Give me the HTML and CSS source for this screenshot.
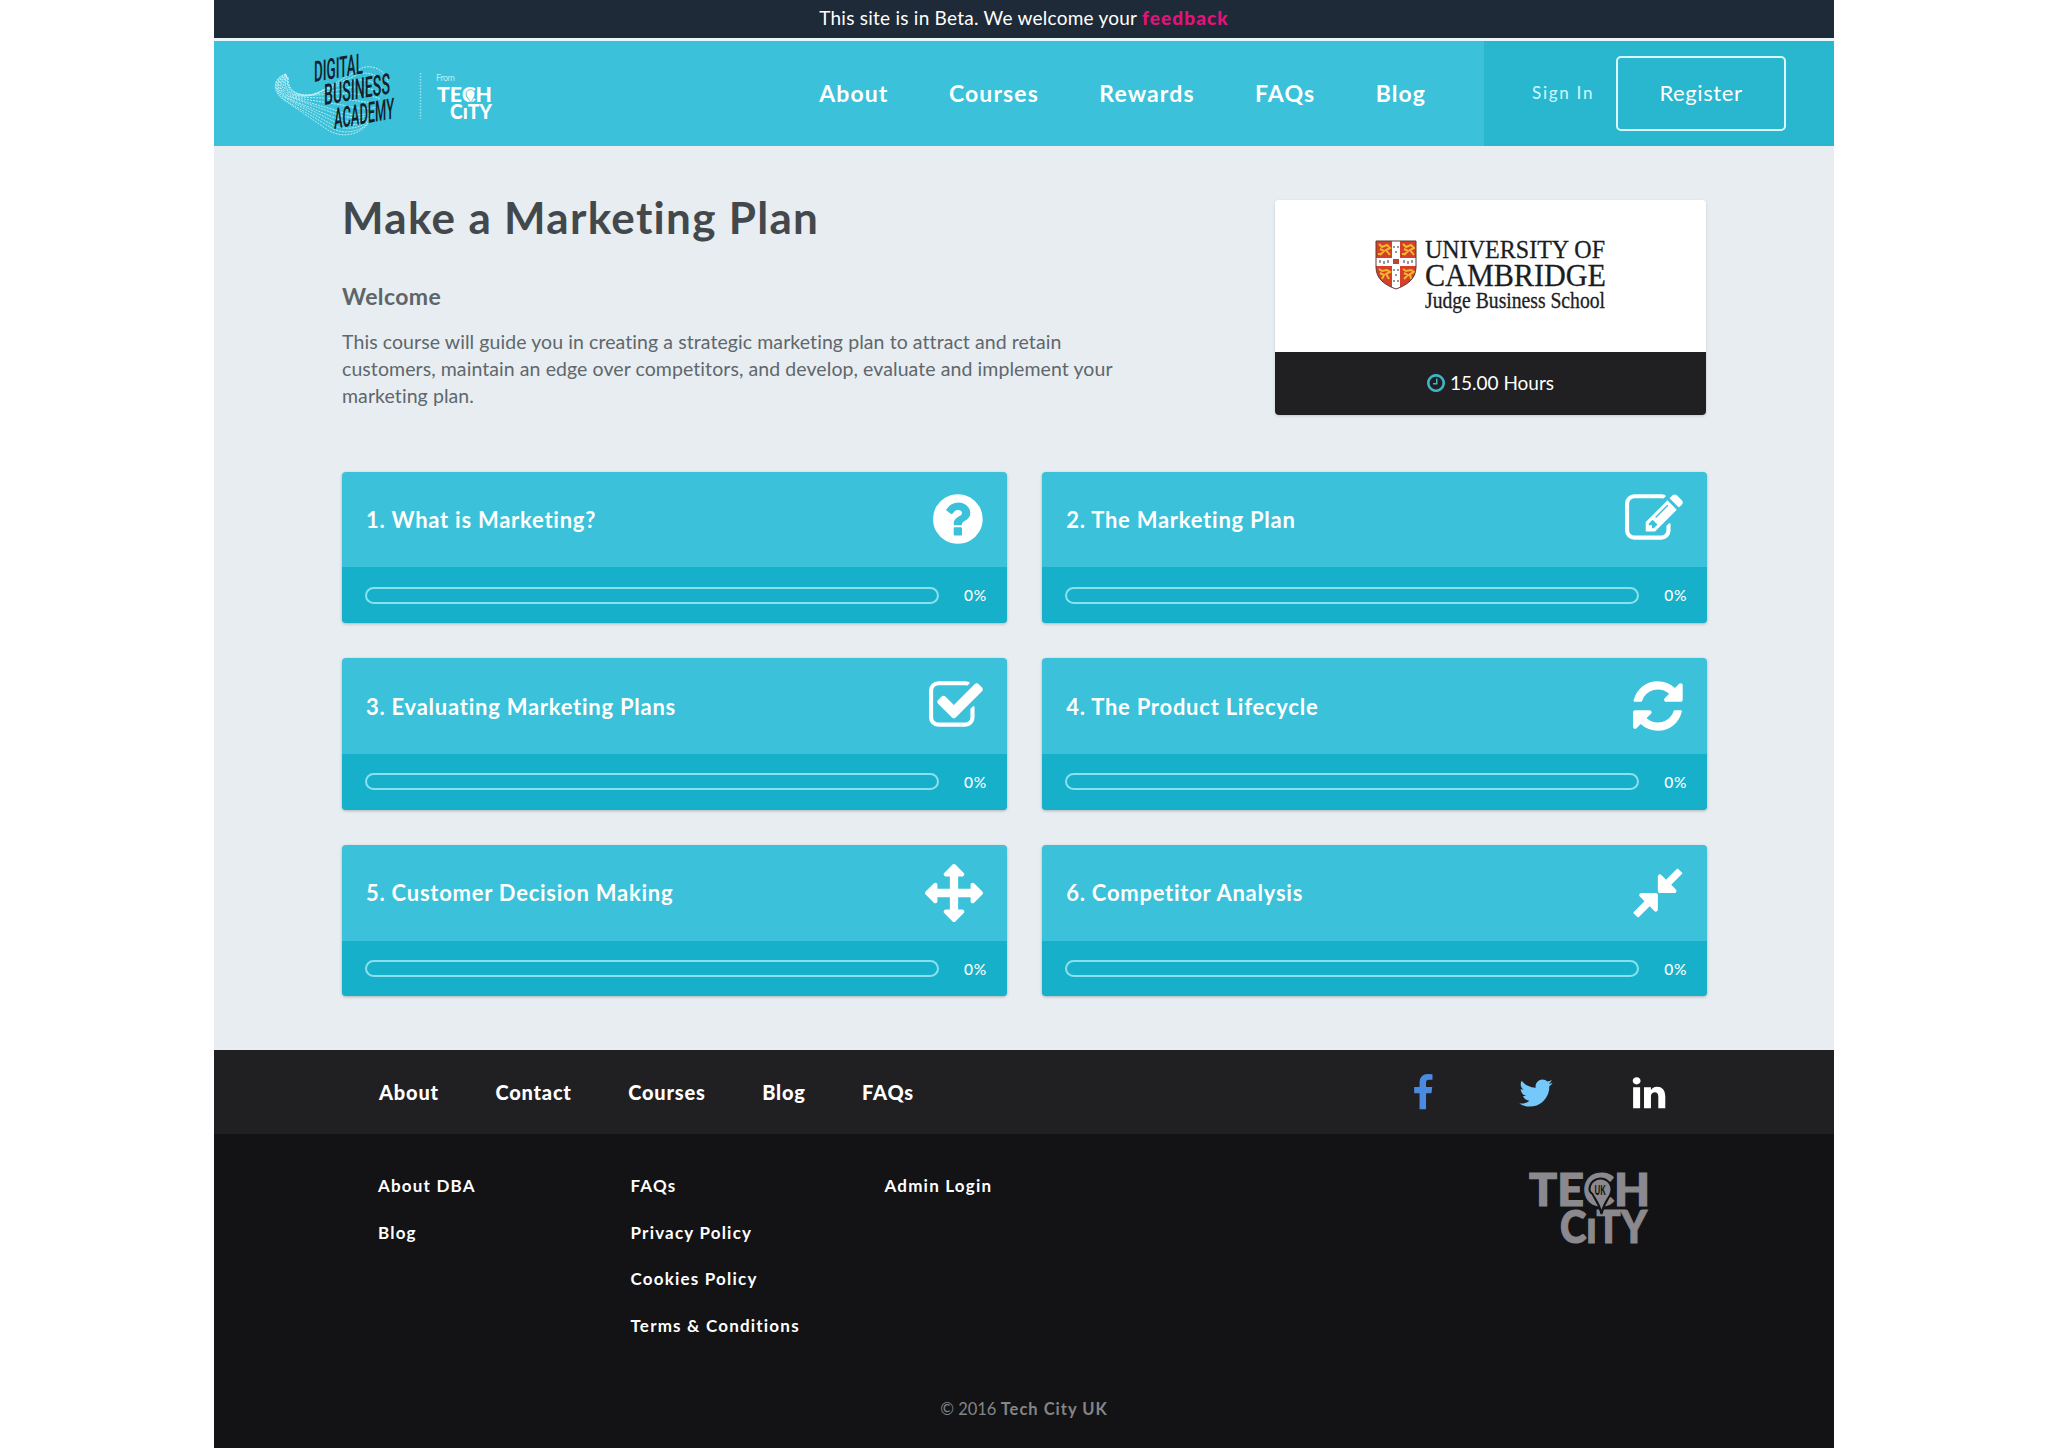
FILE: index.html
```html
<!doctype html>

<html lang="en">

<head>
  <meta charset="utf-8">
  <title>Make a Marketing Plan - Digital Business Academy</title>
  <link rel="stylesheet" href="styles.css">
</head>

<body>
  <div class="page">
    <div class="beta-bar">
      <span>This site is in Beta. We welcome your <a href="#">feedback</a></span>
    </div>

    <header class="header">
      <a class="header-logo" href="#">
        <svg width="240" height="100" viewBox="0 0 240 100">
          <g class="logo-wave">
            <path d="M22 30C8 34 8 48 20 56L64 86C76 94 94 92 104 80"/>
            <path d="M22 30C9 34 9 48 21 56L66 83C78 91 96 89 105 78"/>
            <path d="M22 30C10 35 10 49 23 55L67 80C79 87 97 85 106 76"/>
            <path d="M22 31C11 36 11 49 25 55L69 77C81 83 98 82 107 74"/>
            <path d="M22 31C11 36 12 49 26 55L71 74C82 79 100 79 108 72"/>
            <path d="M23 31C12 37 14 50 28 54L72 70C84 75 101 75 109 69"/>
            <path d="M23 31C13 37 15 50 30 54L74 67C86 72 102 72 110 67"/>
            <path d="M23 32C14 38 17 50 33 54L78 61C89 64 105 66 112 63"/>
            <path d="M23 32C16 39 19 51 36 53L81 55C92 57 108 59 114 59"/>
            <path d="M23 32C18 40 21 52 39 52L84 49C95 50 111 52 116 55"/>
            <path d="M23 33C19 41 23 52 42 52L88 43C98 42 114 46 118 51"/>
            <path d="M24 33C21 42 26 53 46 51L91 36C102 35 116 39 120 46"/>
            <path d="M24 34C22 43 28 53 49 51L95 30C105 27 119 33 122 42"/>
            <path d="M24 34C24 44 30 54 52 50L98 24C108 20 122 26 124 38"/>
          </g>
          <g class="logo-name">
            <text transform="translate(50 38) skewY(-10)" textLength="49" lengthAdjust="spacingAndGlyphs">DIGITAL</text>
            <text transform="translate(60 61) skewY(-10)" textLength="66" lengthAdjust="spacingAndGlyphs">BUSINESS</text>
            <text transform="translate(70 85) skewY(-10)" textLength="60" lengthAdjust="spacingAndGlyphs">ACADEMY</text>
          </g>
          <path class="logo-divider" d="M156.500 29v46"/>
          <text class="logo-from" x="172" y="37" textLength="19">From</text>
          <g class="logo-city">
            <text x="173" y="57.500" textLength="55" lengthAdjust="spacingAndGlyphs">TECH</text>
            <text x="186" y="74.500" textLength="42" lengthAdjust="spacingAndGlyphs">CıTY</text>
          </g>
          <path class="logo-pin" d="M202 50a4.500 4.500 0 1 1 9 0c0 3-3 5-4 10-1-5-5-7-5-10z"/>
        </svg>
      </a>
      <nav class="header-nav">
        <a href="#">About</a>
        <a href="#">Courses</a>
        <a href="#">Rewards</a>
        <a href="#">FAQs</a>
        <a href="#">Blog</a>
      </nav>
      <div class="header-auth">
        <a class="sign-in" href="#">Sign In</a>
        <a class="register" href="#">Register</a>
      </div>
    </header>

    <main class="main">
      <section class="intro">
        <div class="intro-text">
          <h1>Make a Marketing Plan</h1>
          <h2>Welcome</h2>
          <p>This course will guide you in creating a strategic marketing plan to attract and retain<br>customers, maintain an edge over competitors, and develop, evaluate and implement your<br>marketing plan.</p>
        </div>
        <aside class="partner">
          <div class="partner-logo">
            <svg width="232" height="80" viewBox="0 0 232 80">
              <path d="M1 1h40v26c0 12-9 18-20 22C10 45 1 39 1 27z" fill="#d6402b"/>
              <path d="M17 1h8v17h16v8H25v22l-4 1.500-4-1.500V26H1v-8h16z" fill="#fff"/>
              <g class="lions">
                <path d="M4 4l3 3 5-2 3 3-4 2 4 5M5 9l4 2-4 4M3 14h4"/>
                <path d="M28 4l3 3 5-2 3 3-4 2 4 5M29 9l4 2-4 4M27 14h4"/>
                <path d="M4 29l3 2 5-1 3 2-4 2 3 5M5 33l4 2-2 4"/>
                <path d="M28 29l3 2 5-1 3 2-4 2 1 5M29 33l4 2-4 4"/>
              </g>
              <path d="M18 19h6v5h-6z" fill="#b5482f"/>
              <path d="M5 20v3M9 21v3M13 20v3M29 20v3M33 21v3M37 20v3M19 6v2M23 6v2M21 11v2M19 29v2M23 29v2M21 34v2M19 40v2M23 40v2" stroke="#333"/>
              <path d="M1 1h40v26c0 12-9 18-20 22C10 45 1 39 1 27z" fill="none" stroke="#5c3a35"/>
              <g class="partner-name">
                <text x="50" y="18" font-size="26" textLength="180" lengthAdjust="spacingAndGlyphs">UNIVERSITY OF</text>
                <text x="50" y="45.500" font-size="32" textLength="181" lengthAdjust="spacingAndGlyphs">CAMBRIDGE</text>
                <text x="50" y="68" font-size="22.500" textLength="180" lengthAdjust="spacingAndGlyphs">Judge Business School</text>
              </g>
            </svg>
          </div>
          <div class="partner-hours">
            <svg width="18" height="18" viewBox="128 128 1536 1536"><path d="M1024 544v448q0 14-9 23t-23 9h-320q-14 0-23-9t-9-23v-64q0-14 9-23t23-9h224v-352q0-14 9-23t23-9h64q14 0 23 9t9 23zm416 352q0-148-73-273t-198-198-273-73-273 73-198 198-73 273 73 273 198 198 273 73 273-73 198-198 73-273zm224 0q0 209-103 385.500t-279.500 279.500-385.500 103-385.500-103-279.500-279.500-103-385.500 103-385.500 279.500-279.500 385.500-103 385.500 103 279.500 279.500 103 385.500z"/></svg>
            <span>15.00 Hours</span>
          </div>
        </aside>
      </section>

      <section class="modules">
        <a class="module" href="#">
          <div class="module-head">
            <h3>1. What is Marketing?</h3>
            <svg class="module-icon" viewBox="128 0 1536 1792"><path d="M1024 1376v-192q0-14-9-23t-23-9h-192q-14 0-23 9t-9 23v192q0 14 9 23t23 9h192q14 0 23-9t9-23zm256-672q0-88-55.500-163t-138.500-116-170-41q-243 0-371 213-15 24 8 42l132 100q7 6 19 6 16 0 25-12 53-68 86-92 34-24 86-24 48 0 85.500 26t37.500 59q0 38-20 61t-68 45q-63 28-115.500 86.500t-52.500 125.500v36q0 14 9 23t23 9h192q14 0 23-9t9-23q0-19 21.500-49.500t54.500-49.500q32-18 49-28.500t46-35 44.500-48 28-60.500 12.500-81zm384 192q0 209-103 385.500t-279.500 279.500-385.500 103-385.500-103-279.500-279.500-103-385.500 103-385.500 279.500-279.500 385.500-103 385.500 103 279.500 279.500 103 385.500z"/></svg>
          </div>
          <div class="module-progress">
            <div class="progress"></div>
            <span>0%</span>
          </div>
        </a>
        <a class="module" href="#">
          <div class="module-head">
            <h3>2. The Marketing Plan</h3>
            <svg class="module-icon" viewBox="0 0 1792 1792"><path d="M888 1184l116-116-152-152-116 116v56h96v96h56zm440-720q-16-16-33 1l-350 350q-17 17-1 33t33-1l350-350q17-17 1-33zm80 594v190q0 119-84.500 203.500t-203.500 84.500h-832q-119 0-203.500-84.500t-84.500-203.500v-832q0-119 84.500-203.500t203.500-84.500h832q63 0 117 25 15 7 18 23 3 17-9 29l-49 49q-14 14-32 8-23-6-45-6h-832q-66 0-113 47t-47 113v832q0 66 47 113t113 47h832q66 0 113-47t47-113v-126q0-13 9-22l64-64q15-15 35-7t20 29zm-96-738l288 288-672 672h-288v-288zm444 132l-92 92-288-288 92-92q28-28 68-28t68 28l152 152q28 28 28 68t-28 68z"/></svg>
          </div>
          <div class="module-progress">
            <div class="progress"></div>
            <span>0%</span>
          </div>
        </a>
        <a class="module" href="#">
          <div class="module-head">
            <h3>3. Evaluating Marketing Plans</h3>
            <svg class="module-icon" viewBox="64 0 1664 1792"><path d="M1472 930v318q0 119-84.500 203.500t-203.500 84.500h-832q-119 0-203.500-84.500t-84.500-203.500v-832q0-119 84.500-203.500t203.500-84.500h832q63 0 117 25 15 7 18 23 3 17-9 29l-49 49q-10 10-23 10-3 0-9-2-23-6-45-6h-832q-66 0-113 47t-47 113v832q0 66 47 113t113 47h832q66 0 113-47t47-113v-254q0-13 9-22l64-64q10-10 23-10 6 0 12 3 20 8 20 29zm231-489l-814 814q-24 24-57 24t-57-24l-430-430q-24-24-24-57t24-57l110-110q24-24 57-24t57 24l263 263 647-647q24-24 57-24t57 24l110 110q24 24 24 57t-24 57z"/></svg>
          </div>
          <div class="module-progress">
            <div class="progress"></div>
            <span>0%</span>
          </div>
        </a>
        <a class="module" href="#">
          <div class="module-head">
            <h3>4. The Product Lifecycle</h3>
            <svg class="module-icon" viewBox="128 0 1536 1792"><path d="M1639 1056q0 5-1 7-64 268-268 434.500t-478 166.500q-146 0-282.500-55t-243.500-157l-129 129q-19 19-45 19t-45-19-19-45v-448q0-26 19-45t45-19h448q26 0 45 19t19 45-19 45l-137 137q71 66 161 102t187 36q134 0 250-65t186-179q11-17 53-117 8-23 30-23h192q13 0 22.500 9.500t9.500 22.500zm25-800v448q0 26-19 45t-45 19h-448q-26 0-45-19t-19-45 19-45l138-138q-148-137-349-137-134 0-250 65t-186 179q-11 17-53 117-8 23-30 23h-199q-13 0-22.500-9.500t-9.500-22.500v-7q65-268 270-434.500t480-166.500q146 0 284 55.500t245 156.500l130-129q19-19 45-19t45 19 19 45z"/></svg>
          </div>
          <div class="module-progress">
            <div class="progress"></div>
            <span>0%</span>
          </div>
        </a>
        <a class="module" href="#">
          <div class="module-head">
            <h3>5. Customer Decision Making</h3>
            <svg class="module-icon" viewBox="0 0 1792 1792"><path d="M1792 896q0 26-19 45l-256 256q-19 19-45 19t-45-19-19-45v-128h-384v384h128q26 0 45 19t19 45-19 45l-256 256q-19 19-45 19t-45-19l-256-256q-19-19-19-45t19-45 45-19h128v-384h-384v128q0 26-19 45t-45 19-45-19l-256-256q-19-19-19-45t19-45l256-256q19-19 45-19t45 19 19 45v128h384v-384h-128q-26 0-45-19t-19-45 19-45l256-256q19-19 45-19t45 19l256 256q19 19 19 45t-19 45-45 19h-128v384h384v-128q0-26 19-45t45-19 45 19l256 256q19 19 19 45z"/></svg>
          </div>
          <div class="module-progress">
            <div class="progress"></div>
            <span>0%</span>
          </div>
        </a>
        <a class="module" href="#">
          <div class="module-head">
            <h3>6. Competitor Analysis</h3>
            <svg class="module-icon" viewBox="128 0 1536 1792"><path d="M896 960v448q0 26-19 45t-45 19-45-19l-144-144-332 332q-10 10-23 10t-23-10l-114-114q-10-10-10-23t10-23l332-332-144-144q-19-19-19-45t19-45 45-19h448q26 0 45 19t19 45zm755-672q0 13-10 23l-332 332 144 144q19 19 19 45t-19 45-45 19h-448q-26 0-45-19t-19-45v-448q0-26 19-45t45-19 45 19l144 144 332-332q10-10 23-10t23 10l114 114q10 10 10 23z"/></svg>
          </div>
          <div class="module-progress">
            <div class="progress"></div>
            <span>0%</span>
          </div>
        </a>
      </section>
    </main>

    <footer class="footer">
      <div class="footer-top">
        <nav class="footer-nav">
          <a href="#">About</a>
          <a href="#">Contact</a>
          <a href="#">Courses</a>
          <a href="#">Blog</a>
          <a href="#">FAQs</a>
        </nav>
        <div class="social">
          <a class="facebook" href="#"><svg viewBox="0 0 1792 1792"><path d="M1343 12v264h-157q-86 0-116 36t-30 108v189h293l-39 296h-254v759h-306v-759h-255v-296h255v-218q0-186 104-288.500t277-102.500q147 0 228 12z"/></svg></a>
          <a class="twitter" href="#"><svg viewBox="0 0 1792 1792"><path d="M1684 408q-67 98-162 167 1 14 1 42 0 130-38 259.500t-115.500 248.500-184.500 210.500-258 146-323 54.500q-271 0-496-145 35 4 78 4 225 0 401-138-105-2-188-64.500t-114-159.500q33 5 61 5 43 0 85-11-112-23-185.500-111.500t-73.500-205.500v-4q68 38 146 41-66-44-105-115t-39-154q0-88 44-163 121 149 294.500 238.500t371.500 99.500q-8-38-8-74 0-134 94.500-228.500t228.500-94.500q140 0 236 102 109-21 205-78-37 115-142 178 93-10 186-50z"/></svg></a>
          <a class="linkedin" href="#"><svg viewBox="0 0 1792 1792"><path d="M477 625v991h-330v-991h330zm21-306q1 73-50.500 122t-135.500 49h-2q-82 0-132-49t-50-122q0-74 51.500-122.500t134.500-48.500 133 48.500 51 122.500zm1166 729v568h-329v-530q0-105-40.500-164.500t-126.500-59.500q-63 0-105.500 34.500t-63.500 85.500q-11 30-11 81v553h-329q2-399 2-647t-1-296l-1-48h329v144h-2q20-32 41-56t56.500-52 87-43.500 114.500-15.500q171 0 275 113.500t104 332.500z"/></svg></a>
        </div>
      </div>
      <div class="footer-main">
        <ul>
          <li><a href="#">About DBA</a></li>
          <li><a href="#">Blog</a></li>
        </ul>
        <ul>
          <li><a href="#">FAQs</a></li>
          <li><a href="#">Privacy Policy</a></li>
          <li><a href="#">Cookies Policy</a></li>
          <li><a href="#">Terms &amp; Conditions</a></li>
        </ul>
        <ul>
          <li><a href="#">Admin Login</a></li>
        </ul>
        <svg class="footer-logo" width="120" height="74" viewBox="0 0 120 74">
          <g class="tech-city">
            <text x="0" y="34" textLength="121" lengthAdjust="spacingAndGlyphs">TECH</text>
            <text x="31" y="71" textLength="87" lengthAdjust="spacingAndGlyphs">CıTY</text>
          </g>
          <path class="city-pin" d="M60.500 17.500a11 11 0 1 1 21 4.500c-2 5-7 9-9 20-2-11-7-15-9-20q-3-2-3-4.500z"/>
          <text class="city-uk" x="65.500" y="22.500" textLength="11" lengthAdjust="spacingAndGlyphs">UK</text>
        </svg>
      </div>
      <div class="copyright">© 2016 <b>Tech City UK</b></div>
    </footer>
  </div>
</body>

</html>
```

FILE: styles.css
```css
* {
  box-sizing: border-box;
}

body {
  margin: 0;
  background: #fff;
  font-family: Lato, "Liberation Sans", sans-serif;
}

a {
  color: inherit;
  text-decoration: none;
}

h1, h2, h3, p, ul {
  margin: 0;
  padding: 0;
}

svg {
  display: block;
  overflow: visible;
}

.page {
  width: 1620px;
  height: 1448px;
  margin: 0 auto;
  display: flex;
  flex-direction: column;
  background: #e7edf1;
}

.beta-bar {
  height: 41px;
  padding-top: 6px;
  background: #1e2a37;
  border-bottom: 3px solid #e9f7fa;
  color: #fff;
  font-size: 19px;
  letter-spacing: .25px;
  line-height: 24px;
  text-align: center;
}

.beta-bar a {
  color: #e5127d;
  font-weight: 900;
  letter-spacing: 1.1px;
}

/* header */

.header {
  height: 105px;
  display: flex;
  background: #3bc1d9;
  color: #fff;
}

.header-logo {
  padding: 3px 0 0 50px;
}

.logo-wave {
  fill: none;
  stroke: #c4f2f8;
  stroke-width: .9;
  stroke-dasharray: 2 1;
}

.logo-name {
  fill: #10222b;
  font-family: Roboto, sans-serif;
  font-size: 29px;
  font-weight: 500;
}

.logo-divider {
  stroke: #9be3ee;
  stroke-width: 1.5;
  stroke-dasharray: 1.5 1.5;
}

.logo-from {
  fill: #b9eef5;
  font-size: 9px;
}

.logo-city {
  fill: #fff;
  font-size: 20.5px;
  font-weight: 900;
}

.logo-pin {
  fill: #fff;
  stroke: #3bc1d9;
  stroke-width: .8;
}

.header-nav {
  margin-left: auto;
  padding: 0 58px 2px 0;
  display: flex;
  align-items: center;
  gap: 60.5px;
  font-size: 23px;
  font-weight: 700;
  letter-spacing: 1.1px;
}

.header-auth {
  width: 350px;
  padding: 0 48px 0 48px;
  display: flex;
  align-items: center;
  justify-content: space-between;
  background: #29b6cf;
}

.sign-in {
  padding-bottom: 2px;
  color: #c5f5fb;
  font-size: 17px;
  font-weight: 500;
  letter-spacing: 1.7px;
}

.register {
  width: 170px;
  height: 75px;
  border: 2.5px solid #d8fafd;
  border-radius: 5px;
  font-size: 22px;
  letter-spacing: .6px;
  line-height: 69px;
  text-align: center;
}

/* course */

.main {
  height: 904px;
  padding: 54px 127px 0 128px;
}

.intro {
  display: flex;
  justify-content: space-between;
  height: 271.5px;
}

.intro-text h1 {
  margin-top: -11px;
  color: #43484c;
  font-size: 44px;
  letter-spacing: 1.3px;
  line-height: 56px;
}

.intro-text h2 {
  margin-top: 35px;
  color: #5d656a;
  font-size: 23px;
  letter-spacing: .4px;
  line-height: 32px;
}

.intro-text p {
  margin-top: 16px;
  color: #5f676c;
  font-size: 19.5px;
  letter-spacing: .08px;
  line-height: 27px;
}

.partner {
  width: 431px;
  height: 215px;
  margin-right: 1px;
  border-radius: 4px;
  overflow: hidden;
  background: #fff;
  box-shadow: 0 1px 3px rgba(0, 0, 0, .15);
}

.partner-logo {
  height: 152px;
  padding: 40px 0 0 99.5px;
}

.lions {
  fill: none;
  stroke: #f0b92c;
  stroke-width: 2;
}

.partner-name {
  fill: #1d1d1f;
  stroke: #1d1d1f;
  stroke-width: .3;
  font-family: "Liberation Serif", serif;
}

.partner-hours {
  height: 63px;
  padding-bottom: 2px;
  display: flex;
  align-items: center;
  justify-content: center;
  gap: 5px;
  background: #201f21;
  color: #fff;
  font-size: 19px;
}

.partner-hours svg {
  fill: #3fb5c6;
}

.modules {
  display: grid;
  grid-template-columns: 1fr 1fr;
  gap: 35.5px;
}

.module {
  height: 151.3px;
  border-radius: 4px;
  overflow: hidden;
  background: #3bc1d9;
  color: #fff;
  box-shadow: 0 1px 3px rgba(0, 0, 0, .25);
}

.module-head {
  height: 95.5px;
  padding: 0 24px;
  display: flex;
  align-items: center;
  justify-content: space-between;
}

.module-head h3 {
  font-size: 22px;
  letter-spacing: .75px;
}

.module-icon {
  height: 58px;
  fill: #fff;
}

.module-progress {
  height: 56px;
  padding: 0 20px 0 23px;
  display: flex;
  align-items: center;
  justify-content: space-between;
  background: #17b0ca;
  font-size: 15.5px;
  font-weight: 500;
  letter-spacing: .6px;
}

.progress {
  width: 574px;
  height: 17px;
  border: 2px solid #8ae0ec;
  border-radius: 9px;
}

/* footer */

.footer {
  flex: 1;
  background: #131315;
  color: #fff;
}

.footer-top {
  height: 84px;
  padding: 0 166px 0 165px;
  display: flex;
  align-items: center;
  justify-content: space-between;
  background: #202022;
}

.footer-nav {
  display: flex;
  gap: 56.5px;
  font-size: 20px;
  font-weight: 900;
  letter-spacing: .8px;
}

.social {
  padding-top: 2px;
  display: flex;
  gap: 75px;
}

.social svg {
  width: 38px;
  height: 38px;
}

.facebook {
  fill: #4a8ae0;
}

.twitter {
  fill: #74c8fa;
}

.linkedin {
  fill: #fff;
}

.footer-main {
  height: 241px;
  padding: 38px 0 0 164px;
  display: grid;
  grid-template-columns: 252.5px 254px 644.5px 1fr;
  align-items: start;
}

.footer-main ul {
  list-style: none;
  font-size: 17px;
  font-weight: 700;
  letter-spacing: 1.2px;
}

.footer-main li {
  height: 46.7px;
  line-height: 28px;
}

.tech-city {
  fill: #8b898d;
  stroke: #8b898d;
  stroke-width: 1.2;
  font-size: 46px;
  font-weight: 900;
}

.city-pin {
  fill: #8b898d;
  stroke: #131315;
  stroke-width: 2;
}

.city-uk {
  fill: #131315;
  font-size: 13px;
  font-weight: 900;
}

.copyright {
  color: #858588;
  font-size: 16.5px;
  line-height: 68px;
  text-align: center;
}

.copyright b {
  letter-spacing: 1px;
}
```
